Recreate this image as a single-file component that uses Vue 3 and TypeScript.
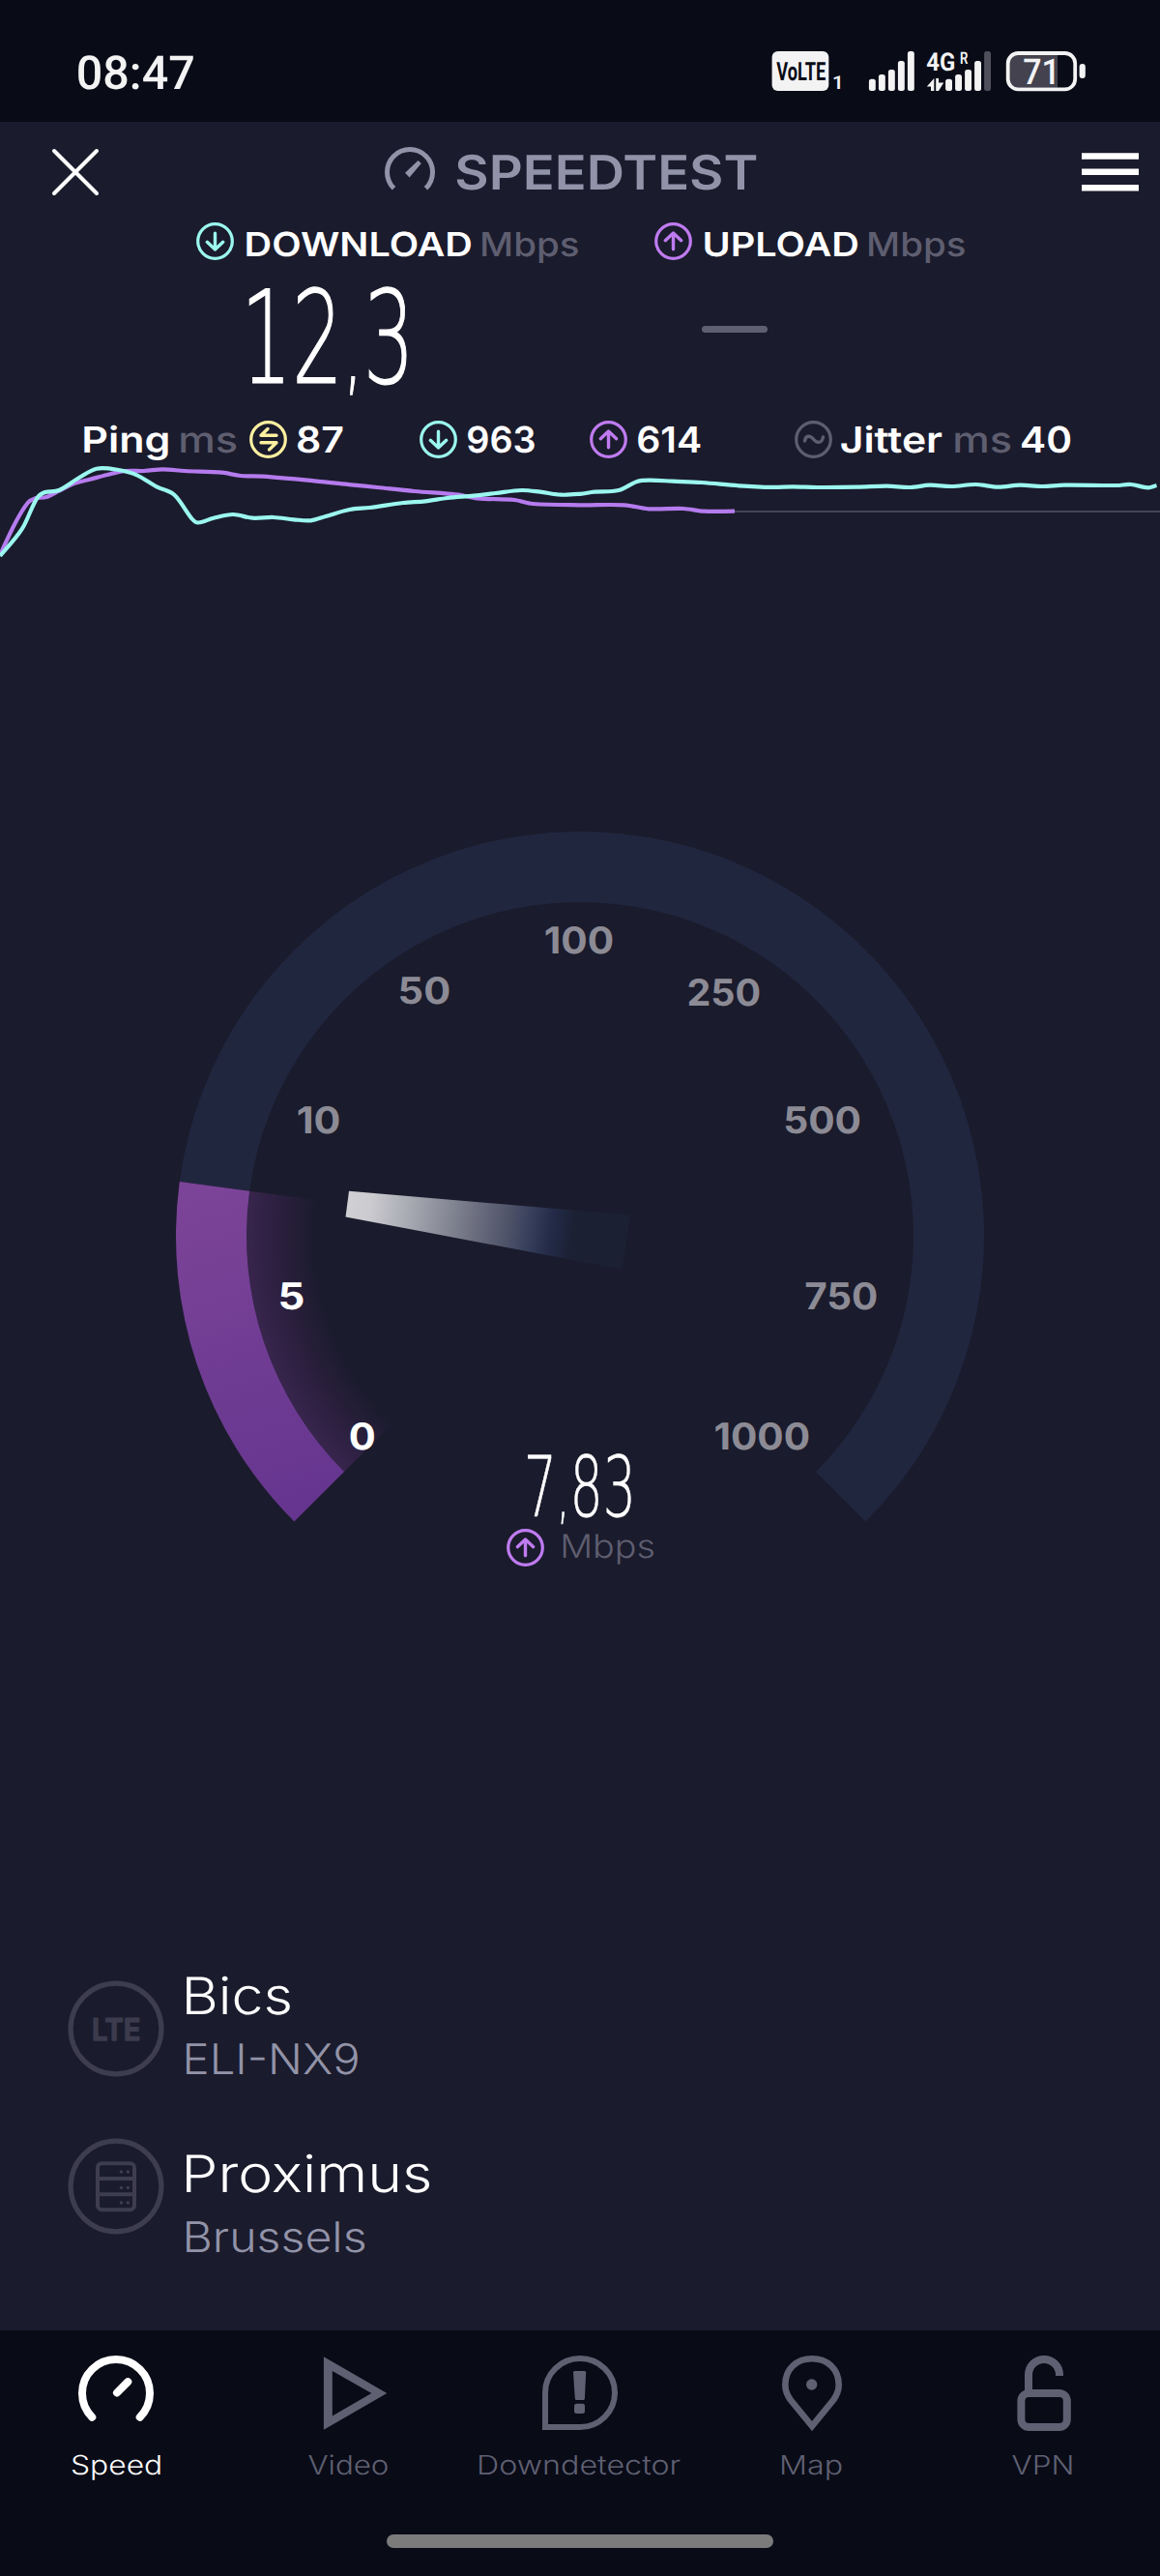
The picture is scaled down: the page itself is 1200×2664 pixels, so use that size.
<script setup lang="ts">
import { h, type FunctionalComponent } from 'vue'

interface FitProps {
  text: string
  w: number
  cap: number
  weight?: number
  family?: string
}

const ctx = document.createElement('canvas').getContext('2d')!

// Commas are set a little smaller so that their tails stay short.
const COMMA = 0.78

// Text sized by its cap height and stretched to a given ink width; the box equals the ink box.
const Fit: FunctionalComponent<FitProps> = (props) => {
  const weight = props.weight ?? 400
  const family = props.family ?? 'Inter'
  ctx.font = `${weight} 400px "${family}", sans-serif`
  const size = (props.cap / ctx.measureText('H').actualBoundingBoxAscent) * 400
  const m = ctx.measureText(props.text)
  const k = size / 400
  const left = m.actualBoundingBoxLeft * k
  const hasComma = props.text.includes(',')
  const saved = hasComma ? ctx.measureText(',').width * (1 - COMMA) : 0
  const ink = (m.actualBoundingBoxLeft + m.actualBoundingBoxRight - saved) * k
  const parts = props.text.split(',')
  return h('svg', { width: props.w, height: props.cap, overflow: 'visible' }, [
    h(
      'text',
      {
        transform: `translate(0 ${props.cap}) scale(${props.w / ink} 1)`,
        x: left,
        y: 0,
        'font-family': `"${family}", sans-serif`,
        'font-size': size,
        'font-weight': weight,
        'text-rendering': 'geometricPrecision',
      },
      hasComma ? [parts[0], h('tspan', { 'font-size': size * COMMA }, ','), parts[1]] : props.text,
    ),
  ])
}
Fit.props = ['text', 'w', 'cap', 'weight', 'family']

const glyphs: Record<string, string> = {
  down: 'M0 -8.2V8.2M-8.2 .8L0 8.5L8.2 .8',
  up: 'M0 8.2V-8.2M-8.2 -.8L0 -8.5L8.2 -.8',
  ping: 'M8.5 -4.2H-7.5L-.5 -11M-7.5 3.3H8.5L1 10.5',
  jitter: 'M-9 1.5C-8 -4.5 -3.5 -4.5 0 -.2C3.5 4 8.5 4.5 10 -2.5',
}
const Ring: FunctionalComponent<{ kind: string }> = (props) =>
  h(
    'svg',
    {
      width: 39,
      height: 39,
      viewBox: '-19.5 -19.5 39 39',
      fill: 'none',
      stroke: 'currentColor',
      'stroke-width': 3.4,
      'stroke-linecap': 'round',
      'stroke-linejoin': 'round',
    },
    [h('circle', { r: 17.8, 'stroke-width': 3.2 }), h('path', { d: glyphs[props.kind] })],
  )
Ring.props = ['kind']

type Pt = [number, number]

const download: Pt[] = [
  [0, 575], [23, 546.7], [40, 513], [61, 507], [81.5, 494.3], [100, 484.7], [122.5, 486], [141.6, 491.3],
  [162.6, 503.7], [180.6, 512], [199, 537], [205, 540.5], [221, 535.7], [241, 532], [261, 535.7], [283, 535],
  [304, 537.3], [321.5, 538.3], [337, 534], [361.6, 527], [382.7, 525], [417, 520], [440, 518.3], [463, 515],
  [490, 512.7], [512.8, 510], [539.6, 507], [558.7, 508.7], [580, 511.7], [600, 510.8], [615, 508.7], [640, 507],
  [659, 498], [672.7, 496.7], [695.7, 497.7], [726, 499], [764.5, 502.3], [799, 503.9], [820, 503.4], [845, 504],
  [887, 503.7], [917.6, 502.7], [941.7, 504], [961.6, 501.7], [984.6, 503], [1009.5, 501], [1032.5, 503.7],
  [1055.4, 501.7], [1078, 503], [1101, 501.7], [1155, 502], [1170, 501], [1187.5, 504.3], [1196.5, 502],
]
const upload: Pt[] = [
  [0, 574], [15.3, 541.7], [28.7, 520], [36.4, 515.3], [48, 514], [61, 507.7], [76.5, 500], [92, 496], [115, 490],
  [130, 487], [149, 487], [168.4, 485.3], [191, 487], [229.6, 488.7], [248.7, 492], [271.7, 492.7], [325, 497.3],
  [363.5, 501.3], [390, 504], [428.6, 508], [474.5, 511.7], [493.6, 515.3], [532, 517], [551, 521], [600, 522.3],
  [646, 522.3], [671, 526.3], [707, 526], [728, 528.7], [760, 528.7],
]

function smooth(p: Pt[]): string {
  let d = `M${p[0][0]} ${p[0][1]}`
  for (let i = 0; i < p.length - 1; i++) {
    const a = p[Math.max(i - 1, 0)]
    const b = p[i]
    const c = p[i + 1]
    const e = p[Math.min(i + 2, p.length - 1)]
    const dx = (c[0] - b[0]) / 3
    const s1 = (c[1] - a[1]) / (c[0] - a[0])
    const s2 = (e[1] - b[1]) / (e[0] - b[0])
    d += `C${b[0] + dx} ${b[1] + dx * s1} ${c[0] - dx} ${c[1] - dx * s2} ${c[0]} ${c[1]}`
  }
  return d
}

// Ring segment of the dial; angles are degrees clockwise from the left horizontal.
function band(from: number, to: number, outer: number, inner: number): string {
  const at = (deg: number, r: number) => {
    const t = (deg * Math.PI) / 180
    return `${600 - r * Math.cos(t)} ${1278 - r * Math.sin(t)}`
  }
  const big = to - from > 180 ? 1 : 0
  return `M${at(from, outer)}A${outer} ${outer} 0 ${big} 1 ${at(to, outer)}L${at(to, inner)}A${inner} ${inner} 0 ${big} 0 ${at(from, inner)}Z`
}

const level = 7.7
const ticks = [
  { text: '0', x: 362, base: 1498.7, w: 25.3, on: true },
  { text: '5', x: 290.3, base: 1353.7, w: 23.2, on: true },
  { text: '10', x: 308, base: 1171.7, w: 43, on: false },
  { text: '50', x: 414.2, base: 1038, w: 50.6, on: false },
  { text: '100', x: 564, base: 985.6, w: 69.7, on: false },
  { text: '250', x: 712.3, base: 1040, w: 73.5, on: false },
  { text: '500', x: 812.7, base: 1171.7, w: 77, on: false },
  { text: '750', x: 833.5, base: 1353.7, w: 73.5, on: false },
  { text: '1000', x: 739.7, base: 1498.7, w: 97, on: false },
]

const signalTops = [81.7, 77, 72, 63, 53]
</script>

<template>
  <div class="screen">
    <div class="status">
      <Fit text="08:47" :w="119" :cap="34.6" :weight="500" family="Roboto" />
      <svg width="326" height="44" viewBox="798 52 326 44" fill="currentColor" overflow="visible">
        <rect x="798.6" y="53" width="58.7" height="41" rx="6" />
        <Fit class="ink" x="803.2" y="63.6" text="VoLTE" :w="50.8" :cap="19" :weight="700" family="Roboto" />
        <Fit x="862.5" y="78" text="1" :w="6.4" :cap="14" :weight="600" family="Roboto" />
        <rect v-for="(t, i) in signalTops" :key="'a' + i" :x="898.9 + i * 10" :y="t" width="6.9" :height="94 - t" rx="2.5" />
        <rect
          v-for="(t, i) in signalTops"
          :key="'b' + i"
          :class="{ faint: i === 4 }"
          :x="978.1 + i * 10"
          :y="t"
          width="6.9"
          :height="94 - t"
          rx="2.5"
        />
        <Fit x="958.6" y="54.3" text="4G" :w="28.7" :cap="18.6" :weight="700" family="Roboto" />
        <Fit x="993.8" y="53" text="R" :w="7.4" :cap="12.5" :weight="600" family="Roboto" />
        <path d="M966.3 81V94H963V89.500H958.800ZM968.200 81H971V85.500H976.200L971 94H968.200Z" />
        <path class="charge" d="M1053 57H1094V90.500H1053A10 10 0 0 1 1043 80V67A10 10 0 0 1 1053 57Z" />
        <rect x="1042.700" y="55" width="69.500" height="37.300" rx="10.500" fill="none" stroke="currentColor" stroke-width="3.800" />
        <rect x="1116.600" y="66" width="6.200" height="15" rx="3" />
        <Fit x="1059.300" y="60.300" text="71" :w="31.500" :cap="26.500" :weight="500" family="Roboto" />
      </svg>
    </div>

    <header class="header">
      <svg width="50" height="50" viewBox="0 0 50 50" stroke="#fff" stroke-width="4" stroke-linecap="round">
        <path d="M3 3L47 47M47 3L3 47" />
      </svg>
      <div class="brand">
        <svg width="52" height="52" viewBox="-26 -26 52 52" fill="none" stroke="currentColor" stroke-width="5">
          <path d="M-16.500 16.800A23.500 23.500 0 1 1 16.500 16.800" />
          <path d="M-5 .8L8.500 -12L11.800 -9L-.4 5.400Z" fill="currentColor" stroke="none" />
        </svg>
        <Fit text="SPEEDTEST" :w="310.500" :cap="36" :weight="600" />
      </div>
      <svg class="menu" width="59" height="40" viewBox="0 0 59 40" fill="#fff">
        <path d="M0 .3H59V6.800H0ZM0 16.600H59V23.100H0ZM0 33H59V39.500H0Z" />
      </svg>
    </header>

    <div class="speeds">
      <div class="speed">
        <Ring kind="down" class="mint" />
        <Fit text="DOWNLOAD" :w="232" :cap="25.300" :weight="600" />
        <Fit class="dim" text="Mbps" :w="99" :cap="25.300" :weight="500" />
      </div>
      <div class="speed">
        <Ring kind="up" class="violet" />
        <Fit text="UPLOAD" :w="158" :cap="25.300" :weight="600" />
        <Fit class="dim" text="Mbps" :w="99" :cap="25.300" :weight="500" />
      </div>
    </div>
    <div class="results">
      <Fit class="thin" text="12,3" :w="162" :cap="98" :weight="200" family="DejaVu Sans" />
      <i class="pending"></i>
    </div>

    <div class="latency">
      <Fit text="Ping" :w="86.700" :cap="27.300" :weight="600" />
      <Fit class="dim ms" text="ms" :w="57.500" :cap="27.300" :weight="500" />
      <Ring kind="ping" class="yellow" />
      <Fit class="num" text="87" :w="46.800" :cap="27.300" :weight="600" />
      <Ring kind="down" class="mint down" />
      <Fit class="num" text="963" :w="69" :cap="27.300" :weight="600" />
      <Ring kind="up" class="violet up" />
      <Fit class="num" text="614" :w="64.500" :cap="27.300" :weight="600" />
      <Ring kind="jitter" class="dim jitter" />
      <Fit class="jit" text="Jitter" :w="104.800" :cap="27.300" :weight="600" />
      <Fit class="dim ms" text="ms" :w="57.500" :cap="27.300" :weight="500" />
      <Fit class="last" text="40" :w="50" :cap="27.300" :weight="600" />
    </div>

    <svg class="chart" width="1200" height="116" viewBox="0 474 1200 116" fill="none" stroke-width="4.200">
      <path d="M760 529H1200" stroke="#45455a" stroke-width="2" />
      <path :d="smooth(upload)" stroke="#b57bee" />
      <path :d="smooth(download)" stroke="#9bf7ef" />
    </svg>

    <svg class="dial" width="880" height="790" viewBox="160 850 880 790">
      <defs>
        <linearGradient id="fill" gradientUnits="userSpaceOnUse" x1="230" y1="1222" x2="330" y2="1560">
          <stop offset="0" stop-color="#7c4498" />
          <stop offset="1" stop-color="#65358f" />
        </linearGradient>
        <radialGradient id="glow" gradientUnits="userSpaceOnUse" cx="600" cy="1278" r="345">
          <stop offset=".79" stop-color="#3a254f" stop-opacity="0" />
          <stop offset=".88" stop-color="#38224c" stop-opacity=".45" />
          <stop offset="1" stop-color="#38254d" />
        </radialGradient>
        <linearGradient id="needle" gradientUnits="userSpaceOnUse" x1="359" y1="1245" x2="648" y2="1284">
          <stop offset="0" stop-color="#d0cfd3" />
          <stop offset=".08" stop-color="#cccbd0" />
          <stop offset=".23" stop-color="#a5a8b0" />
          <stop offset=".46" stop-color="#6c6e7f" />
          <stop offset=".58" stop-color="#4d5268" />
          <stop offset=".67" stop-color="#323a58" />
          <stop offset=".73" stop-color="#232b48" />
          <stop offset=".81" stop-color="#1b2033" />
          <stop offset="1" stop-color="#1b2132" />
        </linearGradient>
      </defs>
      <path :d="band(level, 225, 418, 345)" fill="#21263f" />
      <path :d="band(-45, level, 345, 270)" fill="url(#glow)" />
      <path :d="band(-45, level, 418, 345)" fill="url(#fill)" />
      <path d="M361 1231.700L651.700 1256.500L643.500 1312.700L357.500 1258.500Z" fill="url(#needle)" />
      <Fit
        v-for="t in ticks"
        :key="t.text"
        :class="t.on ? 'lit' : 'tick'"
        :x="t.x"
        :y="t.base - 28"
        :text="t.text"
        :w="t.w"
        :cap="28"
        :weight="700"
      />
      <Fit class="lit thin small" x="546" y="1504.300" text="7,83" :w="106.300" :cap="63.700" :weight="200" family="DejaVu Sans" />
      <Ring kind="up" class="violet" x="524" y="1581" />
      <Fit class="dim" x="582.700" y="1586" text="Mbps" :w="93.500" :cap="24.700" :weight="300" />
    </svg>

    <section class="hosts">
      <div class="host">
        <svg width="100" height="100" viewBox="-50 -50 100 100" class="badge">
          <circle r="46.900" />
          <Fit class="lte" x="-23.300" y="-11" text="LTE" :w="47.500" :cap="23" :weight="600" />
        </svg>
        <div class="names">
          <Fit text="Bics" :w="107.300" :cap="39" :weight="300" />
          <Fit class="soft" text="ELI-NX9" :w="177" :cap="32" :weight="300" />
        </div>
      </div>
      <div class="host second">
        <svg width="100" height="100" viewBox="-50 -50 100 100" class="badge">
          <circle r="46.900" />
          <rect x="-19" y="-23.800" width="38" height="48" rx="4.500" stroke-width="4" />
          <path d="M-19 -8H19M-19 8.300H19" stroke-width="4" />
          <path class="dots" d="M5.500 -15h.01M12.300 -15h.01M5.500 1.500h.01M12.300 1.500h.01M5.500 17h.01M12.300 17h.01" />
        </svg>
        <div class="names">
          <Fit text="Proximus" :w="251.500" :cap="39" :weight="300" />
          <Fit class="soft" text="Brussels" :w="184.300" :cap="32" :weight="300" />
        </div>
      </div>
    </section>

    <nav class="nav">
      <div class="tabs">
        <a class="tab active">
          <svg width="80" height="80" viewBox="80 2435 80 80" stroke-width="8" stroke-linecap="round">
            <path d="M95.300 2499.800A35 35 0 1 1 144.700 2499.800M121 2474.500L132.300 2463.200" />
          </svg>
          <Fit text="Speed" :w="91" :cap="20.300" :weight="300" />
        </a>
        <a class="tab">
          <svg width="80" height="80" viewBox="320 2435 80 80" overflow="visible">
            <path
              d="M334.900 2437.300L400.300 2475L334.900 2512.700ZM343.800 2452V2498.500L384.300 2475Z"
              fill="currentColor"
              fill-rule="evenodd"
              stroke="none"
            />
          </svg>
          <Fit text="Video" :w="82" :cap="20.300" :weight="300" />
        </a>
        <a class="tab">
          <svg width="80" height="80" viewBox="560 2435 80 80" stroke-width="6">
            <path d="M564 2510V2474.500A36 35.500 0 0 1 600 2439A36 35.500 0 0 1 636 2474.500A36 35.500 0 0 1 600 2510Z" />
            <path
              d="M594.500 2452H604.700Q606.300 2452 606.200 2453.600L604.900 2480.500Q604.800 2482 603.300 2482H596.300Q594.900 2482 594.800 2480.500L593 2453.600Q592.900 2452 594.500 2452Z"
              fill="currentColor"
              stroke="none"
            />
            <rect x="594" y="2485.700" width="11" height="10.300" rx="2.500" fill="currentColor" stroke="none" />
          </svg>
          <Fit text="Downdetector" :w="207.800" :cap="20.300" :weight="300" />
        </a>
        <a class="tab">
          <svg width="80" height="80" viewBox="800 2435 80 80" stroke-width="6.600">
            <path d="M840 2509L817.500 2481.500Q812.300 2474 812.300 2466.500C812.300 2450 824 2439.300 840 2439.300S867.700 2450 867.700 2466.500Q867.700 2474 862.500 2481.500Z" />
            <circle cx="839.700" cy="2466" r="5.700" fill="currentColor" stroke="none" />
          </svg>
          <Fit text="Map" :w="61.300" :cap="20.300" :weight="300" />
        </a>
        <a class="tab">
          <svg width="80" height="80" viewBox="1040 2435 80 80" stroke-width="8">
            <rect x="1056.400" y="2475" width="47.400" height="35" rx="8" />
            <path d="M1064 2474V2456A16 16 0 0 1 1096 2456V2457" />
          </svg>
          <Fit class="vpn" text="VPN" :w="61.600" :cap="20.300" :weight="300" />
        </a>
      </div>
      <i class="home"></i>
    </nav>
  </div>
</template>

<style>
body {
  margin: 0;
  background: #1a1b2c;
}
</style>

<style scoped>
.screen {
  width: 1200px;
  height: 2664px;
  display: flex;
  flex-direction: column;
  overflow: hidden;
  background: #1a1b2c;
  color: #fff;
  font-family: Inter, sans-serif;
}
svg {
  display: block;
  flex: none;
  fill: currentColor;
}
svg[fill='none'] {
  fill: none;
}
.status {
  height: 126px;
  flex: none;
  box-sizing: border-box;
  padding: 22px 76px 0 81px;
  display: flex;
  align-items: center;
  justify-content: space-between;
  background: #090b17;
  color: #f3f3f4;
}
.ink {
  color: #090b17;
}
.faint {
  fill: #4f505b;
}
.charge {
  fill: #43424e;
}
.header {
  height: 104px;
  flex: none;
  box-sizing: border-box;
  padding: 0 22.5px 0 53px;
  display: flex;
  align-items: center;
}
.brand {
  margin-left: 295px;
  display: flex;
  align-items: center;
  gap: 21.5px;
  color: #9293a8;
}
.menu {
  margin-left: auto;
}
.speeds {
  height: 39px;
  flex: none;
  display: flex;
  gap: 79px;
  padding-left: 203px;
}
.speed {
  display: flex;
  align-items: flex-start;
  gap: 12.5px;
}
.speed svg + svg {
  margin-top: 9.7px;
}
.mint {
  color: #9bf7ef;
}
.violet {
  color: #bf7bf0;
}
.yellow {
  color: #fdf0a0;
}
.dim {
  color: #5e5e70;
}
.thin {
  stroke: currentColor;
  stroke-width: 1.2;
}
.thin.small {
  stroke-width: 0.6;
}
.results {
  height: 166px;
  flex: none;
  box-sizing: border-box;
  padding: 28.5px 0 0 258px;
  display: flex;
}
.pending {
  width: 68px;
  height: 7px;
  margin: 39.3px 0 0 306px;
  border-radius: 3.5px;
  background: #605f72;
}
.latency {
  height: 39px;
  flex: none;
  display: flex;
  align-items: center;
  padding-left: 87.3px;
}
.ms {
  margin-left: 12.8px;
}
.yellow {
  margin-left: 13.7px;
}
.num {
  margin-left: 11px;
}
.down {
  margin-left: 79px;
}
.up {
  margin-left: 57.5px;
}
.jitter {
  margin-left: 97px;
}
.jit {
  margin-left: 9.5px;
}
.last {
  margin-left: 11.5px;
}
.chart {
  fill: none;
}
.dial {
  margin: 260px 160px 0;
}
.tick {
  color: #8c8b95;
}
.lit {
  color: #fff;
}
.hosts {
  height: 770px;
  flex: 1;
  box-sizing: border-box;
  padding: 404px 0 0 70px;
}
.host {
  display: flex;
  gap: 23.2px;
}
.host .badge {
  margin-top: 4px;
}
.second {
  margin-top: 79.7px;
}
.second .badge {
  margin-top: -17px;
}
.names {
  display: flex;
  flex-direction: column;
  gap: 30px;
}
.soft {
  color: #9293a8;
}
.badge {
  fill: none;
  stroke: #3e3d4f;
  stroke-width: 5.2;
}
.lte {
  fill: #3b3b4d;
  stroke: #3b3b4d;
  stroke-width: 1.6;
  stroke-linejoin: round;
}
.dots {
  stroke-width: 3.6;
  stroke-linecap: round;
}
.nav {
  height: 254px;
  flex: none;
  background: #090b17;
}
.tabs {
  display: grid;
  grid-template-columns: repeat(5, 1fr);
  padding-top: 25px;
}
.tab {
  display: flex;
  flex-direction: column;
  align-items: center;
  gap: 23.7px;
  color: #5f6072;
}
.tab.active {
  color: #fff;
}
.tab > svg:first-child {
  fill: none;
  stroke: currentColor;
}
.vpn {
  margin-right: 3.6px;
}
.home {
  display: block;
  width: 400px;
  height: 14px;
  margin: 62px auto 0;
  border-radius: 7px;
  background: #7b7b7c;
}
</style>
